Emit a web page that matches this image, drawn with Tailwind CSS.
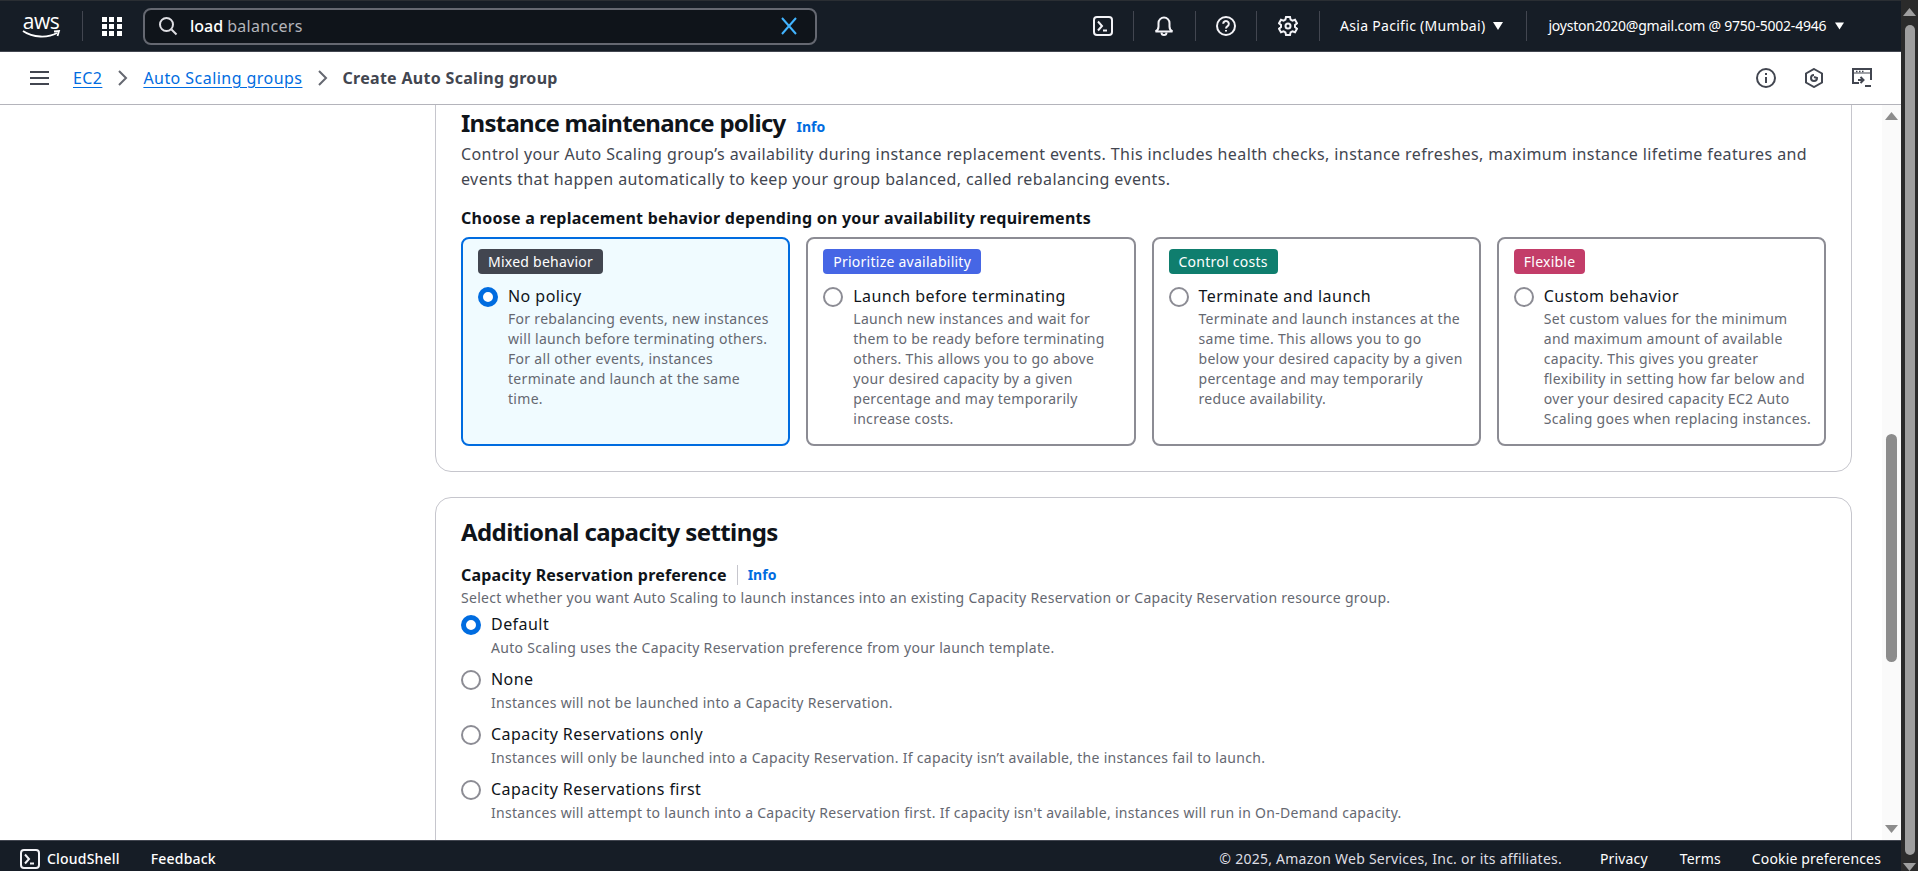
<!DOCTYPE html>
<html lang="en">
<head>
  <meta charset="UTF-8">
  <title>Create Auto Scaling group</title>
  <script src="https://cdn.jsdelivr.net/npm/@tailwindcss/browser@4"></script>
</head>
<body class="h-screen overflow-hidden bg-white font-['Noto_Sans',sans-serif] text-[#0f141a]">
<div class="flex h-[871px]">
  <div class="flex w-[1901px] flex-col">
    <!-- top nav -->
    <header class="flex h-[52px] shrink-0 items-center border-t border-t-[#2a2e33] border-b border-b-[#424650] bg-[#161d26] text-white">
      <div class="ml-[21px] flex w-[40px] flex-col items-center">
        <span class="font-['Open_Sans',sans-serif] text-[21px] leading-[17px] tracking-[-0.5px]">aws</span>
        <svg width="40" height="9" viewBox="0 0 40 9" fill="none" stroke="#fff" stroke-width="1.8"><path d="M2 1c10 7 25 7 34 2"/><path d="M33 1.500l5-.5-1.500 5"/></svg>
      </div>
      <div class="ml-[21px] h-[30px] w-px bg-[#424650]"></div>
      <div class="ml-[19px] grid w-[20px] grid-cols-3 gap-[2px]">
        <i class="size-[5px] bg-white"></i><i class="size-[5px] bg-white"></i><i class="size-[5px] bg-white"></i>
        <i class="size-[5px] bg-white"></i><i class="size-[5px] bg-white"></i><i class="size-[5px] bg-white"></i>
        <i class="size-[5px] bg-white"></i><i class="size-[5px] bg-white"></i><i class="size-[5px] bg-white"></i>
      </div>
      <div class="ml-[21px] flex h-[37px] w-[674px] items-center rounded-lg border-2 border-[#656871] bg-[#0f141a] pl-[13px] pr-[17px]">
        <svg width="20" height="20" viewBox="0 0 20 20" fill="none" stroke="#dedee3" stroke-width="2"><circle cx="8.500" cy="8.500" r="6.500"/><path d="M13.500 13.500l5 5"/></svg>
        <span class="ml-[12px] text-base font-medium text-white">load</span>
        <span class="ml-[4px] text-base tracking-[0.3px] text-[#b4b4bb]">balancers</span>
        <svg class="ml-auto" width="18" height="18" viewBox="0 0 18 18" fill="none" stroke="#42b4ff" stroke-width="2"><path d="M2 1l14 16M16 1L2 17"/></svg>
      </div>
      <div class="ml-[276px] flex items-center">
        <svg width="20" height="20" viewBox="0 0 20 20" fill="none" stroke="#f3f3f7" stroke-width="2"><rect x="1" y="1" width="18" height="18" rx="3"/><path d="M5 5.500l4 4.500-4 4.500M10 14.500h4"/></svg>
        <div class="ml-[20px] h-[30px] w-px bg-[#424650]"></div>
        <svg class="ml-[20px]" width="20" height="20" viewBox="0 0 20 20" fill="none" stroke="#f3f3f7" stroke-width="2"><path d="M1.500 15.500c2-1 3-2.500 3-5V7a5.500 5.500 0 0 1 11 0v3.500c0 2.500 1 4 3 5z"/><path d="M7.500 16.500a2.500 2.500 0 0 0 5 0"/></svg>
        <div class="ml-[21px] h-[30px] w-px bg-[#424650]"></div>
        <svg class="ml-[20px]" width="20" height="20" viewBox="0 0 20 20" fill="none" stroke="#f3f3f7" stroke-width="2"><circle cx="10" cy="10" r="9"/><path d="M7.200 7.800a2.800 2.800 0 1 1 4.400 2.300c-1 .7-1.600 1.200-1.600 2.400"/><path d="M10 14v1.500"/></svg>
        <div class="ml-[20px] h-[30px] w-px bg-[#424650]"></div>
        <svg class="ml-[21px]" width="20" height="20" viewBox="0 0 20 20" fill="none" stroke="#f3f3f7" stroke-width="2"><path d="M8 1h4l.6 2.600 1.800 1 2.600-.8 2 3.400-2 1.800v2l2 1.800-2 3.400-2.600-.8-1.800 1L12 19H8l-.6-2.600-1.800-1-2.600.8-2-3.400 2-1.800V9L1 7.200l2-3.400 2.600.8 1.800-1z"/><circle cx="10" cy="10" r="2.500"/></svg>
        <div class="ml-[21px] h-[30px] w-px bg-[#424650]"></div>
      </div>
      <span class="ml-[20px] text-sm tracking-[0.3px]">Asia Pacific (Mumbai)</span>
      <svg class="ml-[8px]" width="10" height="8" viewBox="0 0 10 8" fill="#fff"><path d="M0 0h10L5 8z"/></svg>
      <div class="ml-[23px] h-[30px] w-px bg-[#424650]"></div>
      <span class="ml-[21px] text-sm tracking-[-0.22px]">joyston2020@gmail.com @ 9750-5002-4946</span>
      <svg class="ml-[9px]" width="9" height="8" viewBox="0 0 10 8" fill="#fff"><path d="M0 0h10L5 8z"/></svg>
    </header>

    <!-- breadcrumb bar -->
    <div class="flex h-[53px] shrink-0 items-center border-b border-[#b4b4bb] bg-white">
      <svg class="ml-[30px]" width="19" height="16" viewBox="0 0 19 16" fill="none" stroke="#424650" stroke-width="2"><path d="M0 2h19M0 8h19M0 14h19"/></svg>
      <a class="ml-[24px] text-base tracking-[0.4px] text-[#006ce0] underline underline-offset-[3px]" href="#">EC2</a>
      <svg class="ml-[16px]" width="10" height="16" viewBox="0 0 10 16" fill="none" stroke="#656871" stroke-width="2"><path d="M1 1l7 7-7 7"/></svg>
      <a class="ml-[15px] text-base tracking-[0.45px] text-[#006ce0] underline underline-offset-[3px]" href="#">Auto Scaling groups</a>
      <svg class="ml-[16px]" width="10" height="16" viewBox="0 0 10 16" fill="none" stroke="#656871" stroke-width="2"><path d="M1 1l7 7-7 7"/></svg>
      <span class="ml-[14px] text-base font-bold tracking-[0.3px] text-[#424650]">Create Auto Scaling group</span>
      <div class="ml-auto mr-[29px] flex items-center gap-[28px]">
        <svg width="20" height="20" viewBox="0 0 20 20" fill="none" stroke="#424650" stroke-width="2"><circle cx="10" cy="10" r="9"/><path d="M10 9v6"/><path d="M10 5v2"/></svg>
        <svg width="20" height="20" viewBox="0 0 20 20" fill="none" stroke="#424650" stroke-width="2"><path d="M10 1l8 4.500v9L10 19l-8-4.500v-9z"/><path d="M10 7a3 3 0 1 0 3 3l-3-1"/></svg>
        <svg width="20" height="20" viewBox="0 0 20 20" fill="none" stroke="#424650" stroke-width="2"><path d="M7 15H1V1h18v11"/><path d="M1 5h18" stroke-width="1"/><path d="M4 3.500h1.500M7 3.500h1.500M10 3.500h1.500" stroke-width="1.500"/><path d="M6 12h5M8.500 9l3 3-3 3"/><path d="M13 18h6"/></svg>
      </div>
    </div>

    <!-- content -->
    <main class="flex min-h-0 flex-1 overflow-hidden">
      <div class="ml-[435px] w-[1417px] shrink-0">
        <section class="-mt-[16px] h-[383px] rounded-2xl border border-[#c6c6cd] pl-[25px] pr-[25px] pt-[17px]">
          <div class="flex items-baseline">
            <h2 class="text-2xl leading-[32px] font-bold tracking-[-0.75px]">Instance maintenance policy</h2>
            <a class="ml-[11px] text-sm font-bold text-[#006ce0]" href="#">Info</a>
          </div>
          <p class="mt-[3px] text-base leading-[25px] tracking-[0.4px] text-[#424650]">Control your Auto Scaling group’s availability during instance replacement events. This includes health checks, instance refreshes, maximum instance lifetime features and events that happen automatically to keep your group balanced, called rebalancing events.</p>
          <h3 class="mt-[14px] text-base leading-[24px] font-bold tracking-[0.25px]">Choose a replacement behavior depending on your availability requirements</h3>
          <div class="mt-[7px] grid grid-cols-4 gap-[16px]">
            <div class="h-[209px] rounded-lg border-2 border-[#006ce0] bg-[#f0fbff] pl-[15px] pr-[13px] pt-[10px]">
              <span class="inline-block h-[25px] rounded bg-[#424650] px-[10px] text-sm leading-[25px] tracking-[0.25px] text-white">Mixed behavior</span>
              <div class="mt-[11px] flex">
                <span class="mt-[2px] size-[20px] shrink-0 rounded-full border-[5px] border-[#006ce0] bg-white"></span>
                <div class="ml-[10px]">
                  <p class="text-base leading-[22px] tracking-[0.45px]">No policy</p>
                  <p class="mt-[2px] text-sm leading-[20px] tracking-[0.3px] text-[#656871]">For rebalancing events, new instances will launch before terminating others. For all other events, instances terminate and launch at the same time.</p>
                </div>
              </div>
            </div>
            <div class="h-[209px] rounded-lg border-2 border-[#8c8c94] pl-[15px] pr-[13px] pt-[10px]">
              <span class="inline-block h-[25px] rounded bg-[#4666e5] px-[10px] text-sm leading-[25px] tracking-[0.25px] text-white">Prioritize availability</span>
              <div class="mt-[11px] flex">
                <span class="mt-[2px] size-[20px] shrink-0 rounded-full border-2 border-[#8c8c94] bg-white"></span>
                <div class="ml-[10px]">
                  <p class="text-base leading-[22px] tracking-[0.45px]">Launch before terminating</p>
                  <p class="mt-[2px] text-sm leading-[20px] tracking-[0.3px] text-[#656871]">Launch new instances and wait for them to be ready before terminating others. This allows you to go above your desired capacity by a given percentage and may temporarily increase costs.</p>
                </div>
              </div>
            </div>
            <div class="h-[209px] rounded-lg border-2 border-[#8c8c94] pl-[15px] pr-[13px] pt-[10px]">
              <span class="inline-block h-[25px] rounded bg-[#0f7e6e] px-[10px] text-sm leading-[25px] tracking-[0.25px] text-white">Control costs</span>
              <div class="mt-[11px] flex">
                <span class="mt-[2px] size-[20px] shrink-0 rounded-full border-2 border-[#8c8c94] bg-white"></span>
                <div class="ml-[10px]">
                  <p class="text-base leading-[22px] tracking-[0.45px]">Terminate and launch</p>
                  <p class="mt-[2px] text-sm leading-[20px] tracking-[0.3px] text-[#656871]">Terminate and launch instances at the same time. This allows you to go below your desired capacity by a given percentage and may temporarily reduce availability.</p>
                </div>
              </div>
            </div>
            <div class="h-[209px] rounded-lg border-2 border-[#8c8c94] pl-[15px] pr-[13px] pt-[10px]">
              <span class="inline-block h-[25px] rounded bg-[#c33d69] px-[10px] text-sm leading-[25px] tracking-[0.25px] text-white">Flexible</span>
              <div class="mt-[11px] flex">
                <span class="mt-[2px] size-[20px] shrink-0 rounded-full border-2 border-[#8c8c94] bg-white"></span>
                <div class="ml-[10px]">
                  <p class="text-base leading-[22px] tracking-[0.45px]">Custom behavior</p>
                  <p class="mt-[2px] text-sm leading-[20px] tracking-[0.3px] text-[#656871]">Set custom values for the minimum and maximum amount of available capacity. This gives you greater flexibility in setting how far below and over your desired capacity EC2 Auto Scaling goes when replacing instances.</p>
                </div>
              </div>
            </div>
          </div>
        </section>

        <section class="mt-[25px] h-[400px] rounded-2xl border border-[#c6c6cd] pl-[25px] pr-[25px] pt-[18px]">
          <h2 class="text-2xl leading-[32px] font-bold tracking-[-0.6px]">Additional capacity settings</h2>
          <div class="mt-[17px] flex items-center">
            <span class="text-base leading-[20px] font-bold tracking-[0.2px]">Capacity Reservation preference</span>
            <span class="ml-[10px] h-[20px] w-px bg-[#c6c6cd]"></span>
            <a class="ml-[10px] text-sm font-bold text-[#006ce0]" href="#">Info</a>
          </div>
          <p class="mt-[3px] text-sm leading-[20px] tracking-[0.3px] text-[#656871]">Select whether you want Auto Scaling to launch instances into an existing Capacity Reservation or Capacity Reservation resource group.</p>
          <div class="mt-[5px] flex flex-col gap-[10px]">
            <div class="flex">
              <span class="mt-[2px] size-[20px] shrink-0 rounded-full border-[5px] border-[#006ce0] bg-white"></span>
              <div class="ml-[10px]"><p class="text-base leading-[22px] tracking-[0.45px]">Default</p><p class="mt-[3px] text-sm leading-[20px] tracking-[0.3px] text-[#656871]">Auto Scaling uses the Capacity Reservation preference from your launch template.</p></div>
            </div>
            <div class="flex">
              <span class="mt-[2px] size-[20px] shrink-0 rounded-full border-2 border-[#8c8c94] bg-white"></span>
              <div class="ml-[10px]"><p class="text-base leading-[22px] tracking-[0.45px]">None</p><p class="mt-[3px] text-sm leading-[20px] tracking-[0.3px] text-[#656871]">Instances will not be launched into a Capacity Reservation.</p></div>
            </div>
            <div class="flex">
              <span class="mt-[2px] size-[20px] shrink-0 rounded-full border-2 border-[#8c8c94] bg-white"></span>
              <div class="ml-[10px]"><p class="text-base leading-[22px] tracking-[0.45px]">Capacity Reservations only</p><p class="mt-[3px] text-sm leading-[20px] tracking-[0.3px] text-[#656871]">Instances will only be launched into a Capacity Reservation. If capacity isn’t available, the instances fail to launch.</p></div>
            </div>
            <div class="flex">
              <span class="mt-[2px] size-[20px] shrink-0 rounded-full border-2 border-[#8c8c94] bg-white"></span>
              <div class="ml-[10px]"><p class="text-base leading-[22px] tracking-[0.45px]">Capacity Reservations first</p><p class="mt-[3px] text-sm leading-[20px] tracking-[0.3px] text-[#656871]">Instances will attempt to launch into a Capacity Reservation first. If capacity isn't available, instances will run in On-Demand capacity.</p></div>
            </div>
          </div>
        </section>
      </div>

      <!-- inner scrollbar -->
      <div class="ml-[30px] flex w-[19px] flex-col items-center bg-[#fafafa] pt-[7px]">
        <svg width="13" height="8" viewBox="0 0 13 8" fill="#8c8c8c"><path d="M6.500 0L13 8H0z"/></svg>
        <div class="mt-[314px] h-[228px] w-[11px] rounded-full bg-[#8c8c8c]"></div>
        <svg class="mt-[163px]" width="13" height="8" viewBox="0 0 13 8" fill="#8c8c8c"><path d="M0 0h13L6.500 8z"/></svg>
      </div>
    </main>

    <!-- footer -->
    <footer class="flex h-[31px] shrink-0 items-center border-t border-[#424650] bg-[#161d26] pt-[6px] text-sm text-white">
      <svg class="ml-[20px]" width="20" height="20" viewBox="0 0 20 20" fill="none" stroke="#f3f3f7" stroke-width="2"><rect x="1" y="1" width="18" height="18" rx="3"/><path d="M5 5.500l4 4.500-4 4.500M10 14.500h4"/></svg>
      <span class="ml-[7px] font-medium tracking-[0.2px]">CloudShell</span>
      <span class="ml-[31px] font-medium tracking-[0.2px]">Feedback</span>
      <span class="ml-auto tracking-[0.25px] text-[#dedee3]">© 2025, Amazon Web Services, Inc. or its affiliates.</span>
      <span class="ml-[38px] tracking-[0.15px]">Privacy</span>
      <span class="ml-[32px] tracking-[0.15px]">Terms</span>
      <span class="ml-[31px] mr-[20px] tracking-[0.15px]">Cookie preferences</span>
    </footer>
  </div>

  <!-- page scrollbar -->
  <div class="flex w-[17px] shrink-0 flex-col items-center bg-[#2b2b2b] pt-[8px]">
    <svg width="13" height="8" viewBox="0 0 13 8" fill="#9f9f9f"><path d="M6.500 0L13 8H0z"/></svg>
    <div class="mt-[9px] h-[830px] w-[10px] rounded-full bg-[#9f9f9f]"></div>
    <svg class="mt-[8px]" width="13" height="8" viewBox="0 0 13 8" fill="#9f9f9f"><path d="M0 0h13L6.500 8z"/></svg>
  </div>
</div>
</body>
</html>
